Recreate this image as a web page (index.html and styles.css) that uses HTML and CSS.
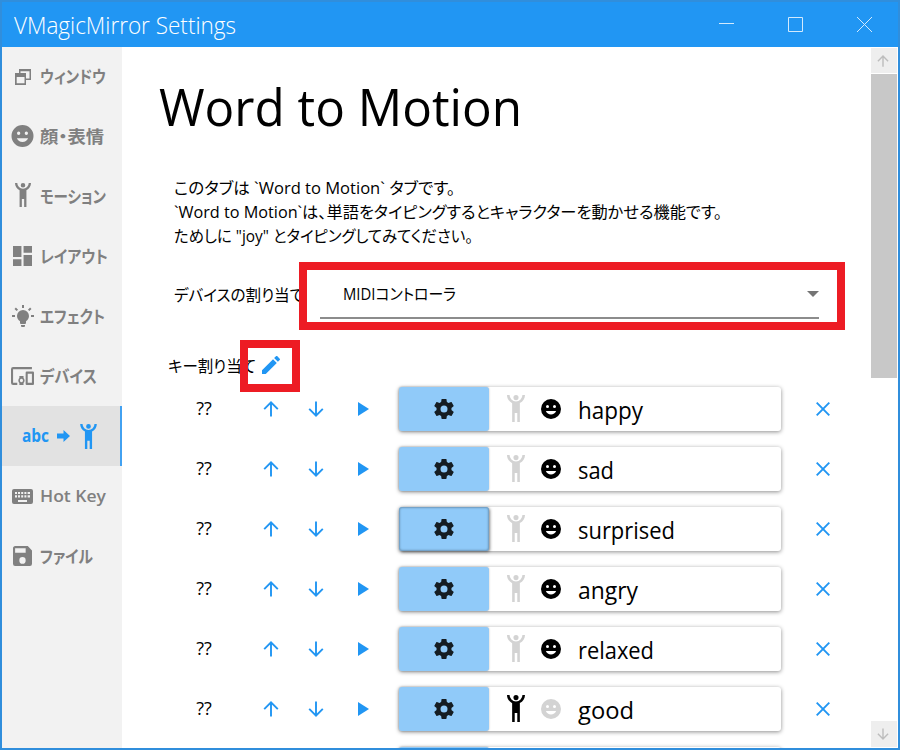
FILE: index.html
```
<!DOCTYPE html>
<html lang="ja">
<head>
<meta charset="utf-8">
<title>VMagicMirror Settings</title>
<link rel="stylesheet" href="styles.css">
</head>
<body>
<svg class="defs" aria-hidden="true">
  <symbol id="human" viewBox="5 1 14 21"><path d="M5,1C5,3.7 6.56,6.16 9,7.32V22H11V15H13V22H15V7.31C17.44,6.16 19,3.7 19,1H17A5,5 0 0,1 12,6A5,5 0 0,1 7,1M12,1A2,2 0 0,0 10,3A2,2 0 0,0 12,5A2,2 0 0,0 14,3A2,2 0 0,0 12,1Z"/></symbol>
  <symbol id="smile" viewBox="2 2 20 20"><path fill-rule="evenodd" d="M12,2A10,10 0 0,0 2,12A10,10 0 0,0 12,22A10,10 0 0,0 22,12A10,10 0 0,0 12,2M7,9.5A1.5,1.5 0 0,1 10,9.5A1.5,1.5 0 0,1 7,9.5M14,9.5A1.5,1.5 0 0,1 17,9.5A1.5,1.5 0 0,1 14,9.5M12,17.5C9.67,17.5 7.69,16.04 6.89,14H17.11C16.31,16.04 14.33,17.5 12,17.5Z"/></symbol>
  <symbol id="cog" viewBox="2 2 20 20"><path d="M12,15.5A3.5,3.5 0 0,1 8.5,12A3.5,3.5 0 0,1 12,8.5A3.5,3.5 0 0,1 15.5,12A3.5,3.5 0 0,1 12,15.5M19.43,12.97C19.47,12.65 19.5,12.33 19.5,12C19.5,11.67 19.47,11.34 19.43,11L21.54,9.37C21.73,9.22 21.78,8.95 21.66,8.73L19.66,5.27C19.54,5.05 19.27,4.96 19.05,5.05L16.56,6.05C16.04,5.66 15.5,5.32 14.87,5.07L14.5,2.42C14.46,2.18 14.25,2 14,2H10C9.75,2 9.54,2.18 9.5,2.42L9.13,5.07C8.5,5.32 7.96,5.66 7.44,6.05L4.95,5.05C4.73,4.96 4.46,5.05 4.34,5.27L2.34,8.73C2.21,8.95 2.27,9.22 2.46,9.37L4.57,11C4.53,11.34 4.5,11.67 4.5,12C4.5,12.33 4.53,12.65 4.57,12.97L2.46,14.63C2.27,14.78 2.21,15.05 2.34,15.27L4.34,18.73C4.46,18.95 4.73,19.03 4.95,18.95L7.44,17.94C7.96,18.34 8.5,18.68 9.13,18.93L9.5,21.58C9.54,21.82 9.75,22 10,22H14C14.25,22 14.46,21.82 14.5,21.58L14.87,18.93C15.5,18.67 16.04,18.34 16.56,17.94L19.05,18.95C19.27,19.03 19.54,18.95 19.66,18.73L21.66,15.27C21.78,15.05 21.73,14.78 21.54,14.63L19.43,12.97Z"/></symbol>
  <symbol id="up" viewBox="0 0 16 16"><path class="line" d="M8,15.5V1.6M1.2,8.2L8,1.4L14.8,8.2"/></symbol>
  <symbol id="down" viewBox="0 0 16 16"><path class="line" d="M8,.5V14.4M1.2,7.8L8,14.6L14.8,7.8"/></symbol>
  <symbol id="play" viewBox="0 0 11 14"><path d="M0,0V14L11,7Z"/></symbol>
  <symbol id="cross" viewBox="0 0 14 14"><path class="line" d="M.7,.7L13.3,13.3M13.3,.7L.7,13.3"/></symbol>
</svg>
<div class="window">
  <header class="titlebar">
    <h1 class="title"><span class="fit" data-w="222">VMagicMirror Settings</span></h1>
    <div class="controls">
      <svg width="15" height="15"><path d="M0,6.5H15"/></svg>
      <svg width="15" height="15"><path d="M.5,.5H14.5V14.5H.5Z"/></svg>
      <svg width="15" height="15"><path d="M0,0L15,15M15,0L0,15"/></svg>
    </div>
  </header>
  <div class="body">
    <nav class="tabs">
      <a class="tab"><i class="ico"><svg class="restore" width="16" height="16" viewBox="0 0 16 16"><path fill-rule="evenodd" d="M4,0H16V11H11V16H0V4H4ZM5.5,4H11V9.5H14.5V2.2H5.5ZM1.7,8V14.3H9.5V8Z"/></svg></i><span class="fit" data-w="66">ウィンドウ</span></a>
      <a class="tab"><i class="ico"><svg width="23" height="22"><use href="#smile"/></svg></i><span class="fit" data-w="64">顔・表情</span></a>
      <a class="tab"><i class="ico"><svg class="raise" width="16" height="24"><use href="#human"/></svg></i><span class="fit" data-w="66">モーション</span></a>
      <a class="tab"><i class="ico"><svg width="19" height="20" viewBox="3 3 18 18" preserveAspectRatio="none"><path d="M13,3V9H21V3M13,21H21V11H13M3,21H11V15H3M3,13H11V3H3V13Z"/></svg></i><span class="fit" data-w="68">レイアウト</span></a>
      <a class="tab"><i class="ico"><svg width="22" height="22" viewBox="1 1 22 22"><path d="M12,6A6,6 0 0,1 18,12C18,14.22 16.79,16.16 15,17.2V19A1,1 0 0,1 14,20H10A1,1 0 0,1 9,19V17.2C7.21,16.16 6,14.22 6,12A6,6 0 0,1 12,6M14,21V22A1,1 0 0,1 13,23H11A1,1 0 0,1 10,22V21H14M20,11H23V13H20V11M1,11H4V13H1V11M13,1V4H11V1H13M4.92,3.5L7.05,5.64L5.63,7.05L3.5,4.93L4.92,3.5M16.95,5.63L19.07,3.5L20.5,4.93L18.37,7.05L16.95,5.63Z"/></svg></i><span class="fit" data-w="65">エフェクト</span></a>
      <a class="tab"><i class="ico"><svg width="23" height="18" viewBox="1 4 22 16" preserveAspectRatio="none"><path d="M3,6H21V4H3A2,2 0 0,0 1,6V18A2,2 0 0,0 3,20H7V18H3V6M13,12H9V13.78C8.39,14.33 8,15.11 8,16C8,16.89 8.39,17.67 9,18.22V20H13V18.22C13.61,17.67 14,16.88 14,16C14,15.12 13.61,14.33 13,13.78V12M11,17.5A1.5,1.5 0 0,1 11,14.5A1.5,1.5 0 0,1 11,17.5M22,8H16A1,1 0 0,0 15,9V19A1,1 0 0,0 16,20H22A1,1 0 0,0 23,19V9A1,1 0 0,0 22,8M21,18H17V10H21V18Z"/></svg></i><span class="fit" data-w="57">デバイス</span></a>
      <a class="tab active"><b class="abc fit" data-w="27">abc</b><svg class="arrow" width="13" height="12" viewBox="0 0 13 12"><path d="M0,3.5H6.5V0L13,6L6.5,12V8.5H0Z"/></svg><svg width="17" height="25"><use href="#human"/></svg></a>
      <a class="tab"><i class="ico"><svg width="21" height="15" viewBox="0 0 21 15"><path fill-rule="evenodd" d="M2,0H19A2,2 0 0,1 21,2V13A2,2 0 0,1 19,15H2A2,2 0 0,1 0,13V2A2,2 0 0,1 2,0M3,3V5H5V3ZM6,3V5H8V3ZM9.2,3V5H11.2V3ZM12.4,3V5H14.4V3ZM15.6,3V5H18V3ZM3,6.2V8.4H5V6.2ZM6,6.2V8.4H8V6.2ZM9.2,6.2V8.4H11.2V6.2ZM12.4,6.2V8.4H14.4V6.2ZM15.6,6.2V8.4H18V6.2ZM6,11V13H15V11Z"/></svg></i><span class="fit" data-w="66">Hot Key</span></a>
      <a class="tab"><i class="ico"><svg width="19" height="20" viewBox="3 3 18 18" preserveAspectRatio="none"><path d="M15,9H5V5H15M12,19A3,3 0 0,1 9,16A3,3 0 0,1 12,13A3,3 0 0,1 15,16A3,3 0 0,1 12,19M17,3H5C3.89,3 3,3.9 3,5V19A2,2 0 0,0 5,21H19A2,2 0 0,0 21,19V7L17,3Z"/></svg></i><span class="fit" data-w="53">ファイル</span></a>
    </nav>
    <main class="content">
      <h2 class="heading"><span class="fit" data-w="363">Word to Motion</span></h2>
      <div class="intro">
        <p><span class="fit" data-w="281">このタブは `Word to Motion` タブです。</span></p>
        <p><span class="fit" data-w="548">`Word to Motion`は、単語をタイピングするとキャラクターを動かせる機能です。</span></p>
        <p><span class="fit" data-w="299">ためしに "joy" とタイピングしてみてください。</span></p>
      </div>
      <div class="device">
        <span class="label"><span class="fit" data-w="130">デバイスの割り当て</span></span>
        <div class="select"><span class="value"><span class="fit" data-w="113">MIDIコントローラ</span></span><svg width="12" height="6"><path d="M0,0H12L6,6Z"/></svg></div>
        <div class="mark mark-device"></div>
      </div>
      <div class="keys">
        <span class="fit" data-w="88">キー割り当て</span>
        <svg class="pencil" width="18" height="18" viewBox="3 3 18 18"><path d="M20.71,7.04C21.1,6.65 21.1,6 20.71,5.63L18.37,3.29C18,2.9 17.35,2.9 16.96,3.29L15.12,5.12L18.87,8.87M3,17.25V21H6.75L17.81,9.93L14.06,6.18L3,17.25Z"/></svg>
        <div class="mark mark-keys"></div>
      </div>
      <div class="rows" id="rows"></div>
    </main>
    <div class="scrollbar">
      <div class="sbtn"><svg width="12" height="12"><use href="#up"/></svg></div>
      <div class="thumb"></div>
      <div class="sbtn end"><svg width="12" height="12"><use href="#down"/></svg></div>
    </div>
  </div>
</div>
<script src="app.js"></script>
</body>
</html>
```
FILE: styles.css
```
* { box-sizing: border-box; }
body { margin: 0; font-family: "Open Sans", "Noto Sans CJK JP", sans-serif; color: #000; }
svg { display: block; fill: currentColor; flex: none; }
h1, h2, p { margin: 0; font-weight: 400; }
.defs { position: absolute; width: 0; height: 0; }
.line { fill: none; stroke: currentColor; stroke-width: 1.9; }
.fit { display: inline-block; white-space: nowrap; transform-origin: 0 50%; font-feature-settings: "palt"; }

.window { width: 900px; height: 750px; border: 2px solid #308edc; display: flex; flex-direction: column; overflow: hidden; background: #fff; }
.titlebar { height: 45px; flex: none; background: #2196f3; color: #fff; display: flex; justify-content: space-between; align-items: center; padding: 0 26px 0 12px; }
.title { font-size: 24px; font-weight: 300; line-height: 45px; width: 300px; }
.controls { display: flex; gap: 54px; color: #d3eafd; }
.controls svg { fill: none; stroke: currentColor; stroke-width: 1; }

.body { flex: 1; min-height: 0; display: flex; }
.tabs { width: 120px; flex: none; background: #f2f2f2; }
.tab { height: 60px; display: flex; align-items: center; color: #808080; font-size: 17px; font-weight: 600; overflow: hidden; }
.tab > span { padding-bottom: 2px; }
.tab:first-child { height: 59px; padding-bottom: 1px; }
.ico { width: 38px; padding-left: 3px; display: flex; justify-content: center; flex: none; }
.raise { margin-bottom: 2px; }
.restore { margin-top: 2px; }
.active { background: #e2e2e2; border-right: 2px solid #42a1f1; color: #2196f3; padding-left: 20px; }
.abc { width: 35px; flex: none; font-size: 17px; line-height: 20px; font-weight: 700; }
.arrow { margin-right: 10px; }

.content { flex: 1; min-width: 0; overflow: hidden; }
.heading { font-size: 52px; line-height: 70px; padding: 24px 0 0 37px; }
.intro { padding: 35px 0 0 52px; font-size: 16px; }
.intro p { height: 24px; line-height: 24px; }
.device { position: relative; height: 70px; margin-top: 13px; padding: 11px 0 0 52px; display: flex; font-size: 16px; }
.label { width: 146px; flex: none; line-height: 46px; }
.select { width: 499px; height: 47px; border-bottom: 2px solid #8c8c8c; padding-left: 23px; display: flex; align-items: center; justify-content: space-between; }
.select svg { color: #757575; margin-bottom: 2px; }
.value { padding-bottom: 3px; }
.mark { position: absolute; border: 8px solid #ed1c24; }
.mark-device { left: 177px; top: 1px; width: 546px; height: 68px; }
.keys { position: relative; height: 52px; margin-top: 9px; padding: 0 0 3px 46px; display: flex; align-items: center; font-size: 16px; }
.pencil { position: absolute; left: 140px; top: 16px; color: #2196f3; }
.mark-keys { left: 118px; top: 0; width: 60px; height: 52px; }

.rows { margin-top: -13px; }
.row { height: 60px; padding-left: 60px; display: grid; grid-template-columns: 44px 23px 44px 46px 48px 12px 382px 84px; align-items: center; justify-items: center; color: #2196f3; }
.key { grid-column: 1; color: #000; font-size: 18px; line-height: 24px; margin-top: -3px; }
.c-up { grid-column: 3; }
.c-play { grid-column: 5; }
.card { grid-column: 7; width: 382px; height: 44px; border-radius: 3px; box-shadow: 0 1px 4px rgba(0,0,0,.45); display: flex; align-items: center; background: #fff; color: #000; }
.gear { width: 90px; height: 44px; border-radius: 3px; background: #90caf9; color: #151d23; display: grid; place-items: center; box-shadow: 0 0 2px rgba(0,0,0,.3); }
.gear.focus { box-shadow: inset 0 0 2px 1px #6b96b9, 1px 1px 3px rgba(0,0,0,.5); }
.c-human { margin-left: 18px; margin-bottom: 2px; }
.c-smile { margin-left: 16px; }
.off { color: #d3d3d3; }
.word { margin-left: 17px; font-size: 23px; line-height: 32px; padding-top: 1px; }

.scrollbar { width: 27px; flex: none; padding: 1px 1px 1px 0; display: flex; flex-direction: column; }
.sbtn { height: 25px; background: #eee; color: #bdbdbd; display: grid; place-items: center; padding-right: 2px; }
.end { margin-top: auto; height: 26px; }
.thumb { height: 304px; margin-top: 1px; background: #c8c8c8; }
```
FILE: app.js
```
const words = [
  { name: "happy", w: 65, face: true },
  { name: "sad", w: 36, face: true },
  { name: "surprised", w: 97, face: true, focus: true },
  { name: "angry", w: 60, face: true },
  { name: "relaxed", w: 76, face: true },
  { name: "good", w: 56, face: false },
  { name: "", w: 0, face: false }
];
const icon = (id, w, h, cls) => `<svg class="${cls}" width="${w}" height="${h}"><use href="#${id}"/></svg>`;
document.getElementById("rows").innerHTML = words.map(r => `
<div class="row">
  <span class="key">${r.name ? "??" : ""}</span>
  ${icon("up", 16, 16, "c-up")}${icon("down", 16, 16, "c-down")}${icon("play", 11, 14, "c-play")}
  <div class="card">
    <div class="gear${r.focus ? " focus" : ""}">${icon("cog", 20, 20, "")}</div>
    ${icon("human", 18, 27, "c-human" + (r.face ? " off" : ""))}
    ${icon("smile", 20, 20, "c-smile" + (r.face ? "" : " off"))}
    <span class="word"><span class="fit" data-w="${r.w}">${r.name}</span></span>
  </div>
  ${icon("cross", 14, 14, "c-cross")}
</div>`).join("");

// Condense each label to its designed width.
document.querySelectorAll(".fit").forEach(el => {
  const range = document.createRange();
  range.selectNodeContents(el);
  const natural = range.getBoundingClientRect().width;
  if (natural) el.style.transform = `scaleX(${el.dataset.w / natural})`;
});
```
